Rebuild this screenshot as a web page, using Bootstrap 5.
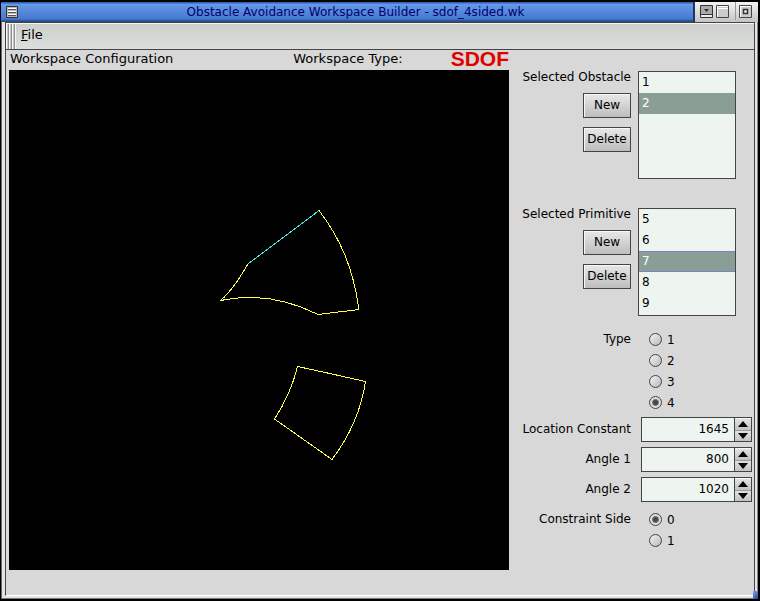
<!DOCTYPE html>
<html lang="en">
<head>
<meta charset="utf-8">
<meta name="viewport" content="width=device-width, initial-scale=1">
<title>Obstacle Avoidance Workspace Builder - sdof_4sided.wk</title>
<link href="https://cdn.jsdelivr.net/npm/bootstrap@5.3.0/dist/css/bootstrap.min.css" rel="stylesheet">
<style>
body { font: 12px/18px "DejaVu Sans", sans-serif; color: #000; background: #000; }
.frame { background: #d8d8d8; border: 1px solid #000; border-width: 2px 2px 2px 1px; }
.titlebar { height: 20px; background: linear-gradient(#2f62b4 0 1px, #6699e8 2px, #4679cf 17px, #274c8c 19px); }
.title-text { line-height: 20px; color: #00006e; }
.win-controls { background: linear-gradient(#f4f4f4, #c4c4c4); border-left: 2px solid #1c3568; padding: 0 6px 2px 5px; gap: 3px; }
.win-btn { border: 0; padding: 0; background: none; display: block; line-height: 0; }
.win-menu { margin: 0 0 0 5px; }
.close-cell { border-left: 1px solid #999; padding-left: 3px; margin-left: 3px; }
.rim { border-left: 1px solid #666; border-right: 1px solid #888; border-bottom: 1px solid #777; background: #e4e4e4; padding-bottom: 2px; }
.client { margin: 0 2px 0 3px; border: 1px solid #444; border-bottom-color: #fff; background: #d8d8d8; }
.menu-strip { height: 27px; background: linear-gradient(#cdcfcd, #dddfdc); border-top: 1px solid #f5f5f5; border-bottom: 1px solid #444; }
.grip { width: 10px; background: repeating-linear-gradient(90deg, #f6f6f6 0 1px, #c8c8c8 1px 2px, #8d8d8d 2px 3px); }
.menu-link { color: #000; padding: 2px 5px; font-size: 13px; text-decoration: none; }
.heading-row { height: 20px; padding-left: 1px; font-size: 13px; }
.kind { color: #e00000; font: 700 21px/18px "Liberation Sans", sans-serif; }
.plot { background: #000; display: block; width: 100%; }
.work-area { padding-left: 3px; }
.panel { width: 245px; padding: 18px 2px 0 0; }
.form-grid { display: grid; grid-template-columns: 122px 1fr; column-gap: 7px; }
.pick-block { height: 137px; }
.caption { margin-bottom: 7px; }
.tool-btn { --bs-btn-padding-x: 0; --bs-btn-padding-y: 0; --bs-btn-font-size: 12px; --bs-btn-line-height: 21px; --bs-btn-border-radius: 0; --bs-btn-border-color: #444; --bs-btn-color: #000; width: 48px; height: 25px; margin-bottom: 9px; background: linear-gradient(#e8e8e8, #bdbdbd); box-shadow: inset 1px 1px #f8f8f8; }
.pick-list { width: 98px; height: 108px; margin-top: 3px; padding: 0; border: 1px solid #444; border-radius: 0; background: #eef4f0; overflow: hidden; outline: 0; font: inherit; color: #000; }
.pick-list option { height: 21px; min-height: 21px; padding: 3px 3px 0; }
.pick-list option:checked { background: #8a9e96 linear-gradient(#8a9e96, #8a9e96); color: #fff; }
.current option:checked { background: #8a9e96 linear-gradient(#7a86bd 0 1px, #8a9e96 1px 20px, #7a86bd 20px); }
.radio-group { padding-left: 11px; }
.radio-row { height: 21px; gap: 5px; }
.row-caption { line-height: 21px; text-align: right; }
.spin-caption { line-height: 25px; text-align: right; }
.radio-dot { appearance: none; width: 13px; height: 13px; margin: 0; border: 1px solid #444; border-radius: 50%; background: linear-gradient(135deg, #f4f4f4, #b8b8b8); }
.radio-dot:checked { background: radial-gradient(circle, #484848 0 2px, #777 3px, #ddd 4px); }
.spin { margin-left: 3px; height: 25px; margin-bottom: 5px; border: 1px solid #444; background: #eef4f0; }
.spin-input { border: 0; outline: 0; background: none; min-width: 0; width: 1px; text-align: right; padding: 0 5px 2px; }
.spin-col { width: 17px; border-left: 1px solid #444; }
.spin-btn { border: 0; border-top: 1px solid #f8f8f8; padding: 0; background: linear-gradient(#e2e2e2, #c2c2c2); line-height: 0; }
.spin-btn + .spin-btn { border-top-color: #999; }
.type-group { margin-bottom: 4px; margin-top: -13px; }
.side-group { margin-top: 2px; }
.resize-corner { right: 0; bottom: 0; width: 5px; height: 8px; background: linear-gradient(135deg, #7ea6e8, #1c4496); }
</style>
<script src="https://cdn.jsdelivr.net/npm/bootstrap@5.3.0/dist/js/bootstrap.bundle.min.js"></script>
</head>
<body>
<div class="frame position-relative d-flex flex-column min-vh-100">
  <header class="titlebar d-flex">
    <button class="win-btn win-menu" aria-label="Window menu">
      <svg width="12" height="20" viewBox="0 0 12 20"><path d="M.5 4.500h11v11H.5z" fill="#bbb" stroke="#333"/><path d="M2 6.500h8M2 9.500h8M2 12.500h8" stroke="#fff"/><path d="M2 7.500h8M2 10.500h8M2 13.500h8" stroke="#555"/></svg>
    </button>
    <div class="title-text flex-grow-1 text-center">Obstacle Avoidance Workspace Builder - sdof_4sided.wk</div>
    <div class="win-controls d-flex align-items-center">
      <button class="win-btn" aria-label="Minimize"><svg width="13" height="13"><path d="M.5.5h12v12H.5z" fill="#eee" stroke="#333"/><path d="M1 1h11v8H1z" fill="#aaa"/><path d="M1 9.500h11" stroke="#333"/><path d="M4 4h5L6.500 7z" fill="#333"/></svg></button>
      <button class="win-btn" aria-label="Maximize"><svg width="13" height="13"><path d="M.5.5h12v12H.5z" fill="#ccc" stroke="#444"/><path d="M1 1.500h11M1 3.500h11M1.500 1v11" stroke="#fff"/></svg></button>
      <div class="close-cell h-100 d-flex align-items-center"><button class="win-btn" aria-label="Close"><svg width="13" height="13"><path d="M.5.5h12v12H.5z" fill="#ccc" stroke="#444"/><path d="M1 1.500h11M1.500 1v11" stroke="#fff"/><path d="M4.500 4.500h4v4h-4z" fill="#eee" stroke="#333" stroke-width="1.500"/></svg></button></div>
    </div>
  </header>
  <div class="rim flex-grow-1 d-flex">
    <main class="client flex-grow-1">
      <nav class="menu-strip d-flex">
        <div class="grip"></div>
        <a class="menu-link" href="#"><u>F</u>ile</a>
      </nav>
      <div class="work-area d-flex">
        <section class="flex-grow-1">
          <div class="heading-row d-flex justify-content-between">
            <span>Workspace Configuration</span>
            <div class="d-flex gap-5"><span>Workspace Type:</span><strong class="kind">SDOF</strong></div>
          </div>
          <svg class="plot" viewBox="0 0 500 500" fill="none" stroke="#ffff50" shape-rendering="crispEdges" role="img" aria-label="Workspace obstacles">
            <path d="M310 140.500C331 168 344 197 350 239.500L309 244.500C286 233 251 222 211.500 230.500C223 221 231 207 239 194"/>
            <path d="M239 194L310 140.500" stroke="#40f0e0"/>
            <path d="M288.500 296.500L314 302L356.500 311.500C352 342 340 367 323 389.500L265.500 349C276 333 284 315 288.500 296.500z"/>
          </svg>
        </section>
        <aside class="panel flex-shrink-0">
          <div class="form-grid">
            <div class="pick-block d-flex flex-column align-items-end">
              <label class="caption" for="obstacle">Selected Obstacle</label>
              <button class="btn tool-btn">New</button>
              <button class="btn tool-btn">Delete</button>
            </div>
            <div><select class="pick-list" id="obstacle" size="5"><option>1</option><option selected>2</option></select></div>
            <div class="pick-block d-flex flex-column align-items-end">
              <label class="caption" for="primitive">Selected Primitive</label>
              <button class="btn tool-btn">New</button>
              <button class="btn tool-btn">Delete</button>
            </div>
            <div><select class="pick-list current" id="primitive" size="5"><option>5</option><option>6</option><option selected>7</option><option>8</option><option>9</option></select></div>

            <div class="type-group row-caption" id="type-caption">Type</div>
            <div class="type-group radio-group" role="radiogroup" aria-labelledby="type-caption">
              <label class="radio-row d-flex align-items-center"><input class="radio-dot" type="radio" name="type">1</label>
              <label class="radio-row d-flex align-items-center"><input class="radio-dot" type="radio" name="type">2</label>
              <label class="radio-row d-flex align-items-center"><input class="radio-dot" type="radio" name="type">3</label>
              <label class="radio-row d-flex align-items-center"><input class="radio-dot" type="radio" name="type" checked>4</label>
            </div>

            <label class="spin-caption text-nowrap" for="location">Location Constant</label>
            <div class="spin d-flex">
              <input class="spin-input flex-grow-1" id="location" type="text" inputmode="numeric" value="1645">
              <div class="spin-col d-flex flex-column">
                <button class="spin-btn flex-fill" aria-label="Increase location constant"><svg width="10" height="6"><path d="M0 6L5 0l5 6z"/></svg></button>
                <button class="spin-btn flex-fill" aria-label="Decrease location constant"><svg width="10" height="6"><path d="M0 0h10L5 6z"/></svg></button>
              </div>
            </div>
            <label class="spin-caption" for="angle1">Angle 1</label>
            <div class="spin d-flex">
              <input class="spin-input flex-grow-1" id="angle1" type="text" inputmode="numeric" value="800">
              <div class="spin-col d-flex flex-column">
                <button class="spin-btn flex-fill" aria-label="Increase angle 1"><svg width="10" height="6"><path d="M0 6L5 0l5 6z"/></svg></button>
                <button class="spin-btn flex-fill" aria-label="Decrease angle 1"><svg width="10" height="6"><path d="M0 0h10L5 6z"/></svg></button>
              </div>
            </div>
            <label class="spin-caption" for="angle2">Angle 2</label>
            <div class="spin d-flex">
              <input class="spin-input flex-grow-1" id="angle2" type="text" inputmode="numeric" value="1020">
              <div class="spin-col d-flex flex-column">
                <button class="spin-btn flex-fill" aria-label="Increase angle 2"><svg width="10" height="6"><path d="M0 6L5 0l5 6z"/></svg></button>
                <button class="spin-btn flex-fill" aria-label="Decrease angle 2"><svg width="10" height="6"><path d="M0 0h10L5 6z"/></svg></button>
              </div>
            </div>

            <div class="side-group row-caption" id="side-caption">Constraint Side</div>
            <div class="side-group radio-group" role="radiogroup" aria-labelledby="side-caption">
              <label class="radio-row d-flex align-items-center"><input class="radio-dot" type="radio" name="side" checked>0</label>
              <label class="radio-row d-flex align-items-center"><input class="radio-dot" type="radio" name="side">1</label>
            </div>
          </div>
        </aside>
      </div>
    </main>
  </div>
  <div class="resize-corner position-absolute"></div>
</div>
</body>
</html>
